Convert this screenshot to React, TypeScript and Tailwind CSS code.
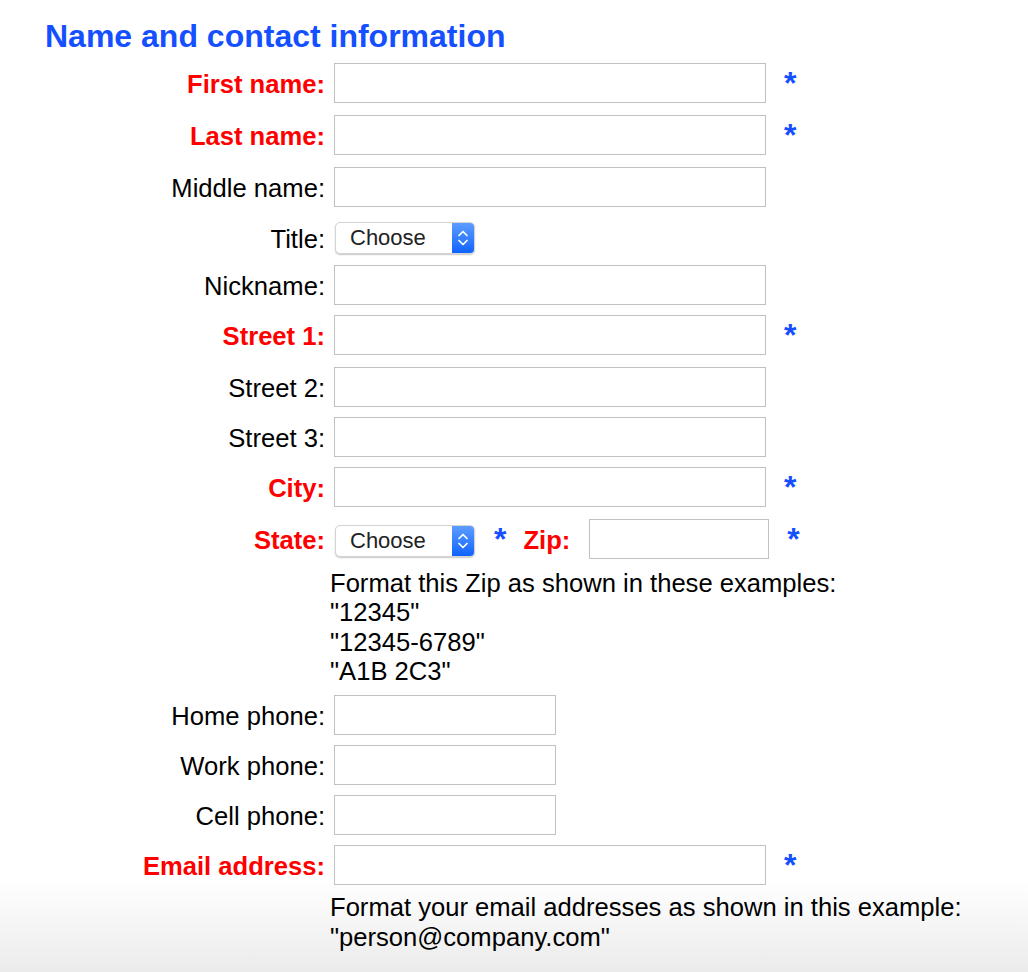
const red = 'text-[#ff0000] font-bold';

function Star({ className = '' }: { className?: string }) {
  return (
    <span className={`text-[32px] leading-[40px] font-bold text-[#1450ff] ${className}`}>*</span>
  );
}

function Label({ text, required }: { text: string; required?: boolean }) {
  return (
    <label className={`w-[325px] shrink-0 text-right pt-[3px] leading-[37px] ${required ? red : 'text-black'}`}>
      {text}
    </label>
  );
}

function TextBox({ w = 'w-[432px]' }: { w?: string }) {
  return <input type="text" className={`${w} h-[40px] border border-[#c2c2c2] bg-white outline-none shrink-0`} />;
}

function Chooser() {
  return (
    <div className="w-[140px] h-[32px] shrink-0 flex rounded-[5px] bg-white border border-[#d4d4d4] shadow-[0_1px_1.5px_rgba(0,0,0,0.22)] overflow-hidden">
      <span className="flex-1 pl-[14px] text-[22px] leading-[30px] text-[#222]">Choose</span>
      <div className="w-[22px] bg-gradient-to-b from-[#5b9cff] to-[#0a62ff] flex items-center justify-center">
        <svg width="12" height="22" viewBox="0 0 12 22" fill="none" stroke="white" strokeWidth="1.7" strokeLinecap="round" strokeLinejoin="round">
          <path d="M2 8.5 L6 4.5 L10 8.5" />
          <path d="M2 13.5 L6 17.5 L10 13.5" />
        </svg>
      </div>
    </div>
  );
}

function Row({ label, required, w, mt }: { label: string; required?: boolean; w?: string; mt: string }) {
  return (
    <div className={`flex items-start h-[40px] ${mt}`}>
      <Label text={label} required={required} />
      <div className="ml-[9px] flex items-start">
        <TextBox w={w} />
        {required && <Star className="ml-[18px]" />}
      </div>
    </div>
  );
}

export default function App() {
  return (
    <div
      className="min-h-[972px] w-full text-[25.6px] bg-[linear-gradient(to_bottom,#ffffff_0px,#ffffff_880px,#ebebeb_972px)]"
      style={{ fontFamily: '"Liberation Sans", Arial, Helvetica, sans-serif' }}
    >
      <div className="pt-[18px]">
        <h2 className="pl-[45px] text-[32px] leading-[37px] font-bold text-[#1450ff]">Name and contact information</h2>

        <Row label="First name:" required mt="mt-[8px]" />
        <Row label="Last name:" required mt="mt-[12px]" />
        <Row label="Middle name:" mt="mt-[12px]" />

        <div className="flex items-start h-[40px] mt-[11px]">
          <Label text="Title:" />
          <div className="ml-[10px] h-[40px] flex items-center">
            <Chooser />
          </div>
        </div>

        <Row label="Nickname:" mt="mt-[7px]" />
        <Row label="Street 1:" required mt="mt-[10px]" />
        <Row label="Street 2:" mt="mt-[12px]" />
        <Row label="Street 3:" mt="mt-[10px]" />
        <Row label="City:" required mt="mt-[10px]" />

        <div className="flex items-start h-[40px] mt-[12px]">
          <Label text="State:" required />
          <div className="ml-[10px] h-[40px] pt-[4px] flex items-center">
            <Chooser />
          </div>
          <Star className="ml-[19px]" />
          <span className={`ml-[17px] pt-[3px] leading-[37px] ${red}`}>Zip:</span>
          <div className="ml-[19px]">
            <TextBox w="w-[180px]" />
          </div>
          <Star className="ml-[18px]" />
        </div>

        <div className="ml-[330px] mt-[10px] leading-[29.4px] text-black">
          <div>Format this Zip as shown in these examples:</div>
          <div>"12345"</div>
          <div>"12345-6789"</div>
          <div>"A1B 2C3"</div>
        </div>

        <Row label="Home phone:" w="w-[222px]" mt="mt-[8px]" />
        <Row label="Work phone:" w="w-[222px]" mt="mt-[10px]" />
        <Row label="Cell phone:" w="w-[222px]" mt="mt-[10px]" />
        <Row label="Email address:" required mt="mt-[10px]" />

        <div className="ml-[330px] mt-[7px] leading-[30px] text-black">
          <div>Format your email addresses as shown in this example:</div>
          <div>"person@company.com"</div>
        </div>
      </div>
    </div>
  );
}
